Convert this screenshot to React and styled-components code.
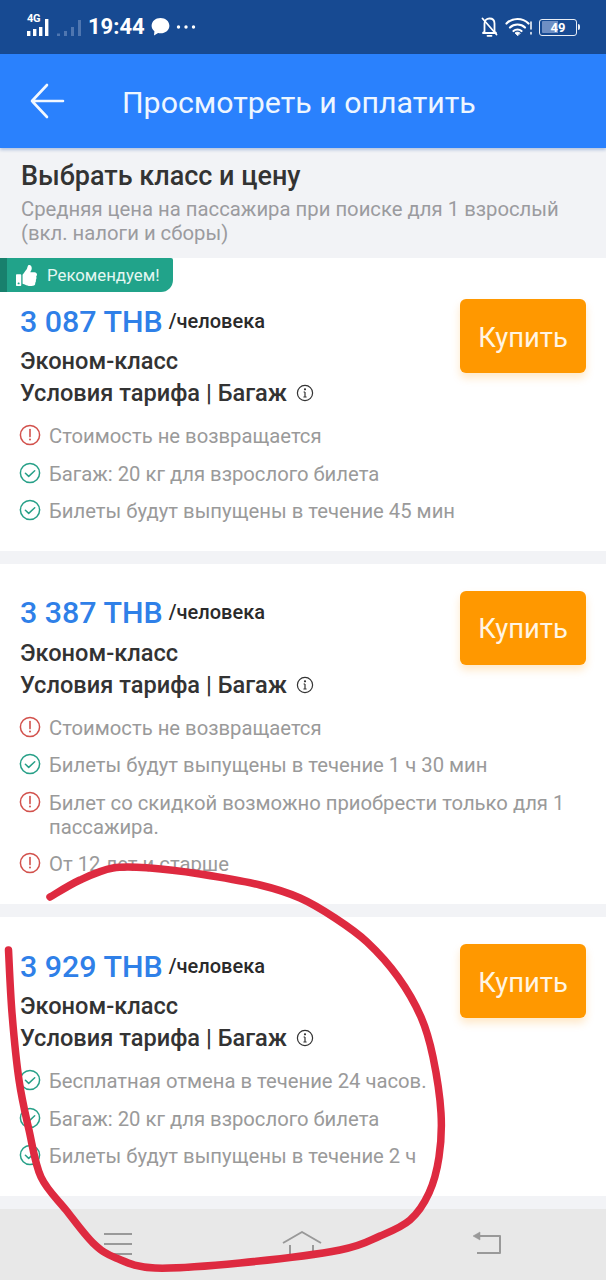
import React from "react";
import styled, { createGlobalStyle } from "styled-components";
import { FaThumbsUp } from "react-icons/fa";

const Global = createGlobalStyle`
  html, body { margin: 0; padding: 0; background: #f2f3f6; }
  * { box-sizing: border-box; }
`;

const Page = styled.div`
  position: relative;
  width: 606px;
  height: 1280px;
  overflow: hidden;
  display: flex;
  flex-direction: column;
  background: #f2f3f6;
  font-family: Roboto, "Liberation Sans", sans-serif;
`;

const StatusBar = styled.div`
  height: 54px;
  flex: none;
  background: #174a92;
  display: flex;
  align-items: center;
  justify-content: space-between;
  padding: 0 27px 0 27px;
  color: #fff;
`;
const StatusGroup = styled.div`
  display: flex;
  align-items: center;
  gap: ${(p) => p.$gap || 6}px;
`;
const Time = styled.span`
  font-size: 22px;
  font-weight: 700;
  line-height: 54px;
  color: #fff;
`;
const Network = styled.div`
  position: relative;
  width: 24px;
  height: 22px;
`;
const NetworkLabel = styled.span`
  position: absolute;
  left: 0;
  top: -3px;
  font-size: 11px;
  font-weight: 700;
  line-height: 12px;
  letter-spacing: -0.3px;
`;
const BatteryBody = styled.div`
  width: 38px;
  height: 17px;
  border: 1.5px solid #e8edf5;
  border-radius: 3px;
  padding: 1.5px;
  display: flex;
  position: relative;
  margin-right: 2px;
  &::after {
    content: "";
    position: absolute;
    right: -4px;
    top: 4px;
    width: 2px;
    height: 6px;
    background: #e8edf5;
    border-radius: 0 2px 2px 0;
  }
`;
const BatteryFill = styled.div`
  height: 100%;
  width: 100%;
  border-radius: 1px;
  display: flex;
  align-items: center;
  justify-content: center;
  font-size: 13px;
  font-weight: 700;
  color: #fff;
  line-height: 1;
  background: linear-gradient(90deg, #6f8fc4 0 50%, #174a92 50% 100%);
`;

const Header = styled.header`
  height: 94px;
  flex: none;
  background: #2a81fd;
  display: flex;
  align-items: center;
  padding: 0 0 0 30px;
  gap: 57px;
  position: relative;
  box-shadow: 0 2px 3px rgba(40, 90, 170, 0.3);
  z-index: 1;
`;
const Title = styled.h1`
  margin: 4px 0 0;
  font-size: 30.3px;
  font-weight: 400;
  color: #eef6ff;
  line-height: 40px;
  white-space: nowrap;
`;

const SectionHead = styled.div`
  height: 110px;
  flex: none;
  padding: 10px 21px 0;
`;
const SectionTitle = styled.h2`
  margin: 0;
  font-size: 27px;
  line-height: 36px;
  font-weight: 500;
  color: #333;
`;
const SectionSub = styled.p`
  margin: 3px 0 0;
  font-size: 20.3px;
  line-height: 24px;
  color: #9b9b9f;
  white-space: nowrap;
`;

const Card = styled.section`
  flex: none;
  background: #fff;
  margin-bottom: 12.75px;
  padding: ${(p) => (p.$badged ? 0 : 27)}px 0 28px;
`;
const Badge = styled.div`
  width: 173px;
  height: 34px;
  margin-bottom: 7px;
  background: #21a38a;
  border-left: 7px solid #18806d;
  border-radius: 0 2px 12px 0;
  display: flex;
  align-items: center;
  gap: 10px;
  padding-left: 9px;
  color: #e4f7f2;
  font-size: 16.8px;
  white-space: nowrap;
`;
const CardTop = styled.div`
  display: flex;
  justify-content: space-between;
  align-items: flex-start;
  padding: 0 20px 0 20px;
`;
const PriceRow = styled.div`
  height: 44px;
  display: flex;
  align-items: center;
  gap: 6px;
  margin-bottom: 2px;
`;
const Price = styled.span`
  font-size: 30.4px;
  font-weight: 500;
  color: #2f80e8;
  white-space: nowrap;
`;
const PerPerson = styled.span`
  font-size: 20px;
  font-weight: 500;
  color: #2a2a2a;
  margin-bottom: 1px;
`;
const InfoLine = styled.div`
  display: flex;
  align-items: center;
  gap: 9px;
  font-size: 23.6px;
  font-weight: 500;
  line-height: 32px;
  color: #333;
  white-space: nowrap;
`;
const BuyButton = styled.button`
  width: 126px;
  height: 74px;
  flex: none;
  border: 0;
  border-radius: 6px;
  background: #ff9800;
  color: #fff5e4;
  font: 400 27.4px Roboto, sans-serif;
  padding: 3px 0 0;
  box-shadow: 0 5px 8px rgba(255, 152, 0, 0.22);
`;
const Notes = styled.ul`
  list-style: none;
  margin: 15px 0 0;
  padding: 0 20px 0 19px;
  display: flex;
  flex-direction: column;
  gap: 13.5px;
`;
const Note = styled.li`
  display: flex;
  align-items: flex-start;
  gap: 8px;
  font-size: 20.25px;
  line-height: 24px;
  color: #9a9a9a;
`;
const NoteIcon = styled.svg`
  flex: none;
  width: 22px;
  height: 22px;
`;

const NavBar = styled.nav`
  flex: 1;
  background: #e8e8e8;
  display: flex;
  justify-content: space-between;
  align-items: flex-start;
  padding: 22px 104px 0;
`;

const Scribble = styled.svg`
  position: absolute;
  inset: 0;
  pointer-events: none;
  z-index: 2;
`;

const Info = () => (
  <svg width="18" height="18" viewBox="0 0 18 18" fill="none" stroke="#333" strokeWidth="1.2">
    <circle cx="9" cy="9" r="7.6" />
    <path d="M9 8v5M7.6 8H9M7.4 13h3.2" />
    <circle cx="9" cy="5.3" r="0.5" fill="#333" />
  </svg>
);

const Warn = () => (
  <NoteIcon viewBox="0 0 22 22" fill="none">
    <circle cx="11" cy="11" r="9.6" stroke="#d2514c" strokeWidth="1.5" />
    <path d="M11 5.6v7" stroke="#d2514c" strokeWidth="1.6" strokeLinecap="round" />
    <circle cx="11" cy="15.6" r="1" fill="#d2514c" />
  </NoteIcon>
);
const Ok = () => (
  <NoteIcon viewBox="0 0 22 22" fill="none">
    <circle cx="11" cy="11" r="9.6" stroke="#27a088" strokeWidth="1.5" />
    <path d="M6.4 11.2l3.3 3.2 6-5.6" stroke="#27a088" strokeWidth="1.5" strokeLinecap="round" strokeLinejoin="round" />
  </NoteIcon>
);

const OFFERS = [
  {
    price: "3 087 THB",
    badged: true,
    notes: [
      ["warn", "Стоимость не возвращается"],
      ["ok", "Багаж: 20 кг для взрослого билета"],
      ["ok", "Билеты будут выпущены в течение 45 мин"],
    ],
  },
  {
    price: "3 387 THB",
    notes: [
      ["warn", "Стоимость не возвращается"],
      ["ok", "Билеты будут выпущены в течение 1 ч 30 мин"],
      ["warn", "Билет со скидкой возможно приобрести только для 1 пассажира."],
      ["warn", "От 12 лет и старше"],
    ],
  },
  {
    price: "3 929 THB",
    notes: [
      ["ok", "Бесплатная отмена в течение 24 часов."],
      ["ok", "Багаж: 20 кг для взрослого билета"],
      ["ok", "Билеты будут выпущены в течение 2 ч"],
    ],
  },
];

const POINTS = [
  [50, 897], [80, 880], [113, 868], [150, 868], [200, 874], [260, 885], [300, 898], [335, 918], [367, 942],
  [398, 977], [421, 1017], [433, 1057], [441, 1113], [439, 1157], [429, 1193], [410, 1220], [380, 1236],
  [340, 1250], [240, 1263], [155, 1268], [116, 1258], [93, 1243], [66, 1210], [41, 1177], [29, 1130],
  [19, 1080], [12, 1013], [8.5, 950],
];
const smooth = (pts) => {
  let d = `M${pts[0][0]} ${pts[0][1]}`;
  for (let i = 0; i < pts.length - 1; i++) {
    const p0 = pts[i - 1] || pts[i];
    const p1 = pts[i];
    const p2 = pts[i + 1];
    const p3 = pts[i + 2] || p2;
    const c1x = p1[0] + (p2[0] - p0[0]) / 6;
    const c1y = p1[1] + (p2[1] - p0[1]) / 6;
    const c2x = p2[0] - (p3[0] - p1[0]) / 6;
    const c2y = p2[1] - (p3[1] - p1[1]) / 6;
    d += `C${c1x} ${c1y} ${c2x} ${c2y} ${p2[0]} ${p2[1]}`;
  }
  return d;
};

export default function App() {
  return (
    <Page>
      <Global />
      <StatusBar>
        <StatusGroup>
          <Network>
            <NetworkLabel>4G</NetworkLabel>
            <svg width="24" height="22" viewBox="0 0 24 22" fill="#fff">
              <rect x="0" y="15" width="3.4" height="5" />
              <rect x="6" y="13" width="3.4" height="7" />
              <rect x="12" y="11" width="3.4" height="9" />
              <rect x="18" y="3" width="3.4" height="17" />
            </svg>
          </Network>
          <svg width="25" height="22" viewBox="0 0 25 22" fill="#4f76b0">
            <rect x="0" y="17.5" width="3" height="2.5" />
            <rect x="7" y="15" width="3" height="5" />
            <rect x="14" y="11" width="3" height="9" />
            <rect x="21" y="4" width="3" height="16" />
          </svg>
          <Time>19:44</Time>
          <svg width="19" height="20" viewBox="0 0 19 20" fill="#fff">
            <path d="M9.5 1C14.5 1 18.4 4.4 18.4 8.7c0 4.3-3.9 7.6-8.9 7.6-.9 0-1.6-.1-2.4-.3L3 18.4l.4-4.2C1.6 12.8.6 10.9.6 8.7.6 4.4 4.5 1 9.5 1z" />
          </svg>
          <svg width="20" height="6" viewBox="0 0 20 6" fill="#fff">
            <circle cx="2.5" cy="3" r="1.7" />
            <circle cx="10" cy="3" r="1.7" />
            <circle cx="17.5" cy="3" r="1.7" />
          </svg>
        </StatusGroup>
        <StatusGroup $gap={7}>
          <svg width="17" height="22" viewBox="0 0 17 22" fill="none" stroke="#fff" strokeWidth="1.8" strokeLinecap="round" strokeLinejoin="round">
            <path d="M3.5 15.5V7.5c0-3 2-5 5-5s5 2 5 5v8l1.5 1.5H2z" />
            <path d="M6.5 19.8h4" />
            <path d="M1.5 2.5l14 16" />
          </svg>
          <svg width="27" height="22" viewBox="0 0 27 22" fill="none" stroke="#fff" strokeWidth="2.2" strokeLinecap="round">
            <path d="M1.5 7.5c6-6 16-6 22 0" />
            <path d="M5 11.5c4-4 11-4 15 0" />
            <path d="M8.5 15c2.2-2 5.8-2 8 0" />
            <path d="M12.5 19.5l-2.5-2.5c1.5-1.2 3.5-1.2 5 0z" fill="#fff" strokeWidth="0.8" />
            <path d="M26 6v7M26 16.5v1.5" strokeWidth="1.5" />
          </svg>
          <BatteryBody>
            <BatteryFill>49</BatteryFill>
          </BatteryBody>
        </StatusGroup>
      </StatusBar>

      <Header>
        <svg width="35" height="36" viewBox="0 0 35 36" fill="none" stroke="#f2f8ff" strokeWidth="2.6" strokeLinecap="round" strokeLinejoin="round">
          <path d="M33 18H2M17 2L2 18l15 16" />
        </svg>
        <Title>Просмотреть и оплатить</Title>
      </Header>

      <SectionHead>
        <SectionTitle>Выбрать класс и цену</SectionTitle>
        <SectionSub>
          Средняя цена на пассажира при поиске для 1 взрослый
          <br />
          (вкл. налоги и сборы)
        </SectionSub>
      </SectionHead>

      {OFFERS.map((offer) => (
        <Card key={offer.price} $badged={offer.badged}>
          {offer.badged && (
            <Badge>
              <FaThumbsUp size={21} color="#fff" />
              Рекомендуем!
            </Badge>
          )}
          <CardTop>
            <div>
              <PriceRow>
                <Price>{offer.price}</Price>
                <PerPerson>/человека</PerPerson>
              </PriceRow>
              <InfoLine>Эконом-класс</InfoLine>
              <InfoLine>
                Условия тарифа | Багаж <Info />
              </InfoLine>
            </div>
            <BuyButton>Купить</BuyButton>
          </CardTop>
          <Notes>
            {offer.notes.map(([kind, text]) => (
              <Note key={text}>
                {kind === "warn" ? <Warn /> : <Ok />}
                <span>{text}</span>
              </Note>
            ))}
          </Notes>
        </Card>
      ))}

      <NavBar>
        <svg width="28" height="24" viewBox="0 0 28 24" fill="none" stroke="#999" strokeWidth="2">
          <path d="M0 3h28M0 13h28M0 23h28" />
        </svg>
        <svg width="40" height="24" viewBox="0 0 40 24" fill="none" stroke="#999" strokeWidth="2" strokeLinejoin="round">
          <path d="M1 12L20 1l19 11" />
          <path d="M8 14v10M31 14v10" />
        </svg>
        <svg width="30" height="24" viewBox="0 0 30 24" fill="none" stroke="#999" strokeWidth="2" strokeLinejoin="round">
          <path d="M6 5h22v17H5" />
          <path d="M1 5l7-4v8z" fill="#999" strokeWidth="0.5" />
        </svg>
      </NavBar>

      <Scribble width="606" height="1280" viewBox="0 0 606 1280" fill="none">
        <path d={smooth(POINTS)} stroke="#de2a40" strokeWidth="7.5" strokeLinecap="round" strokeLinejoin="round" />
      </Scribble>
    </Page>
  );
}
